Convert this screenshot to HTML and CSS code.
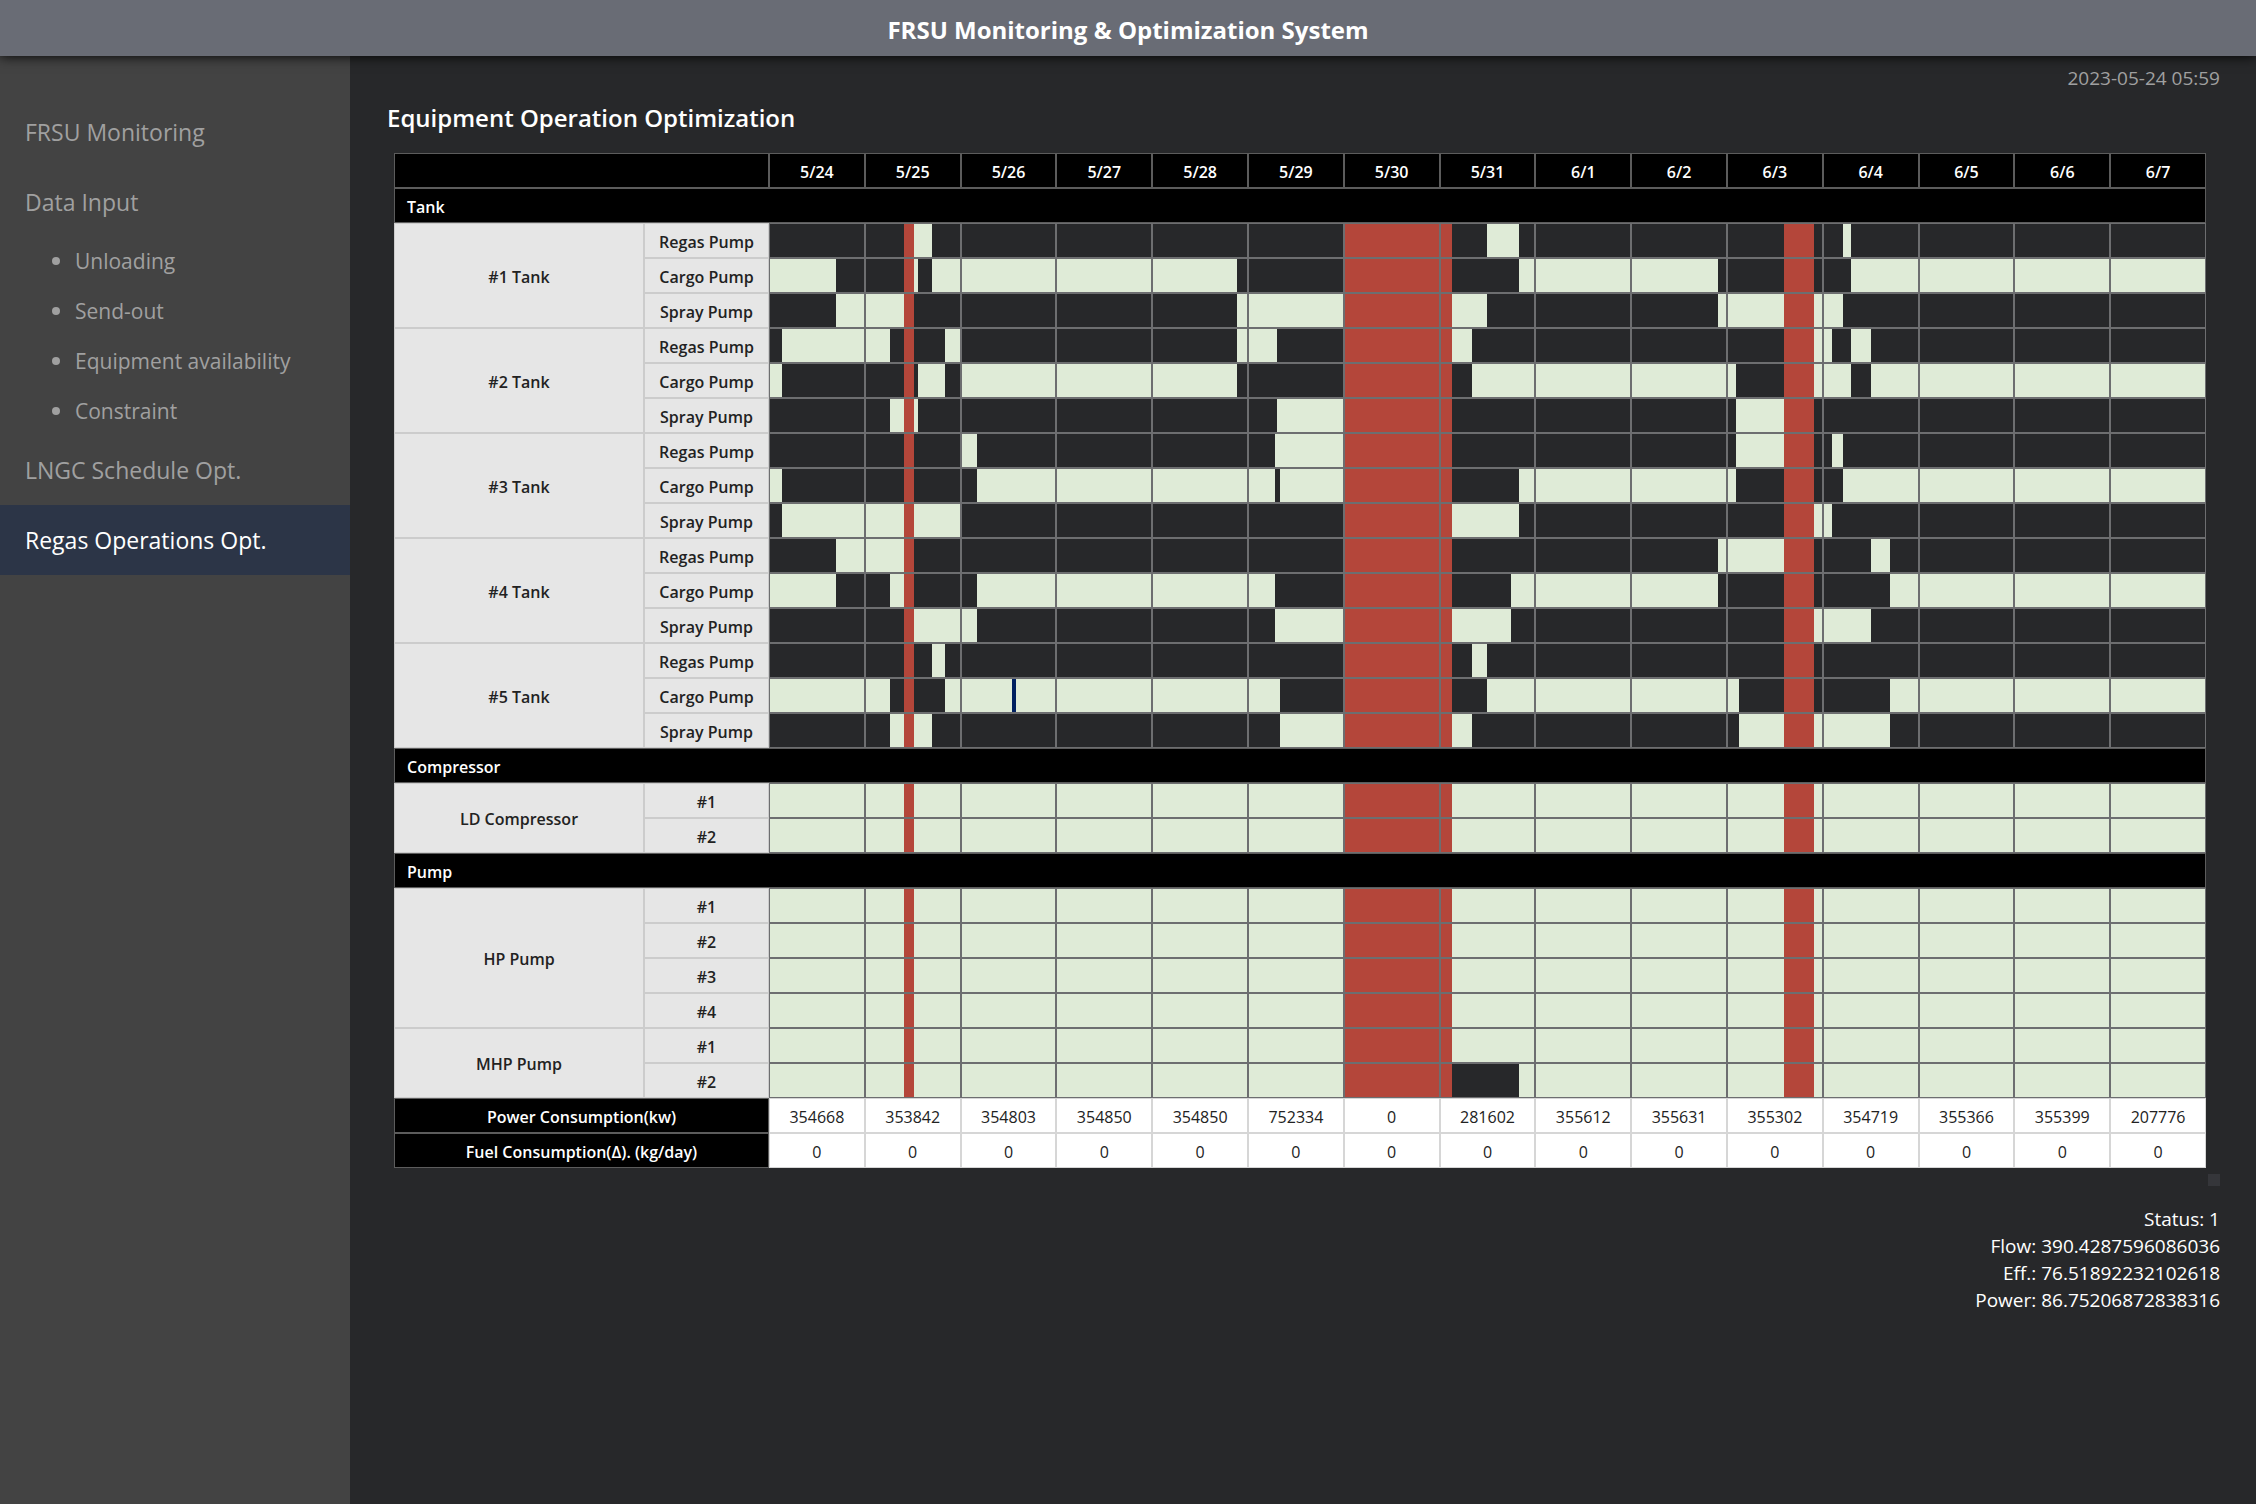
FILE: index.html
```html
<!DOCTYPE html>
<html lang="en">
<head>
<meta charset="utf-8">
<title>FRSU Monitoring &amp; Optimization System</title>
<link rel="stylesheet" href="styles.css">
</head>
<body>
<header class="topbar">FRSU Monitoring &amp; Optimization System</header>
<div class="layout">
  <nav class="sidebar">
    <a class="nav-link" href="#monitoring">FRSU Monitoring</a>
    <a class="nav-link" href="#input">Data Input</a>
    <ul class="subnav">
      <li><a href="#unloading">Unloading</a></li>
      <li><a href="#send-out">Send-out</a></li>
      <li><a href="#availability">Equipment availability</a></li>
      <li><a href="#constraint">Constraint</a></li>
    </ul>
    <a class="nav-link" href="#lngc">LNGC Schedule Opt.</a>
    <a class="nav-link active" href="#regas" aria-current="page">Regas Operations Opt.</a>
  </nav>
  <main class="content">
    <time class="clock" datetime="2023-05-24T05:59">2023-05-24 05:59</time>
    <h1 class="title">Equipment Operation Optimization</h1>
    <div class="schedule-wrap">
      <table class="schedule">
        <colgroup><col class="col-group"><col class="col-unit"><col span="15"></colgroup>
        <thead>
          <tr class="days"><th colspan="2"></th><th>5/24</th><th>5/25</th><th>5/26</th><th>5/27</th><th>5/28</th><th>5/29</th><th>5/30</th><th>5/31</th><th>6/1</th><th>6/2</th><th>6/3</th><th>6/4</th><th>6/5</th><th>6/6</th><th>6/7</th></tr>
        </thead>
        <tbody>
          <tr class="section"><th colspan="17">Tank</th></tr>
          <tr data-on="36.3-40.9 179.9-188.1 268.9-271"><th rowspan="3">#1 Tank</th><th>Regas Pump</th></tr>
          <tr data-on="0-17 36.3-37.4 40.9-117.4 188.1-238 271-360"><th>Cargo Pump</th></tr>
          <tr data-on="17-33.8 117.4-144 170.9-179.9 238-268.9"><th>Spray Pump</th></tr>
          <tr data-on="3-30.2 44.3-48 117.4-127.2 170.9-176 262-266.1 271-276.1"><th rowspan="3">#2 Tank</th><th>Regas Pump</th></tr>
          <tr data-on="0-3 37.4-44.3 48-117.4 176-242 262-271 276.1-360"><th>Cargo Pump</th></tr>
          <tr data-on="30.2-33.8 36.3-37.4 127.2-144 242-254.3"><th>Spray Pump</th></tr>
          <tr data-on="48-51.9 126.7-144 242-254.3 266.1-268.9"><th rowspan="3">#3 Tank</th><th>Regas Pump</th></tr>
          <tr data-on="0-3 51.9-126.7 127.9-144 188.1-242 268.9-360"><th>Cargo Pump</th></tr>
          <tr data-on="3-48 170.9-188.1 262-266.1"><th>Spray Pump</th></tr>
          <tr data-on="17-33.8 238-254.3 276.1-280.9"><th rowspan="3">#4 Tank</th><th>Regas Pump</th></tr>
          <tr data-on="0-17 30.2-33.8 51.9-126.7 186-238 280.9-360"><th>Cargo Pump</th></tr>
          <tr data-on="36.3-51.9 126.7-144 170.9-186 262-276.1"><th>Spray Pump</th></tr>
          <tr data-on="40.9-44.3 176-179.9"><th rowspan="3">#5 Tank</th><th>Regas Pump</th></tr>
          <tr data-on="0-30.2 44.3-127.9 179.9-242.8 280.9-360" data-mark="60.9-61.9"><th>Cargo Pump</th></tr>
          <tr data-on="30.2-40.9 127.9-144 170.9-176 242.8-280.9"><th>Spray Pump</th></tr>
        </tbody>
        <tbody>
          <tr class="section"><th colspan="17">Compressor</th></tr>
          <tr data-on="0-360"><th rowspan="2">LD Compressor</th><th>#1</th></tr>
          <tr data-on="0-360"><th>#2</th></tr>
        </tbody>
        <tbody>
          <tr class="section"><th colspan="17">Pump</th></tr>
          <tr data-on="0-360"><th rowspan="4">HP Pump</th><th>#1</th></tr>
          <tr data-on="0-360"><th>#2</th></tr>
          <tr data-on="0-360"><th>#3</th></tr>
          <tr data-on="0-360"><th>#4</th></tr>
          <tr data-on="0-360"><th rowspan="2">MHP Pump</th><th>#1</th></tr>
          <tr data-on="0-170.9 188.1-360"><th>#2</th></tr>
        </tbody>
        <tfoot>
          <tr><th colspan="2">Power Consumption(kw)</th><td>354668</td><td>353842</td><td>354803</td><td>354850</td><td>354850</td><td>752334</td><td>0</td><td>281602</td><td>355612</td><td>355631</td><td>355302</td><td>354719</td><td>355366</td><td>355399</td><td>207776</td></tr>
          <tr><th colspan="2">Fuel Consumption(Δ). (kg/day)</th><td>0</td><td>0</td><td>0</td><td>0</td><td>0</td><td>0</td><td>0</td><td>0</td><td>0</td><td>0</td><td>0</td><td>0</td><td>0</td><td>0</td><td>0</td></tr>
        </tfoot>
      </table>
      <div class="scroll-corner"></div>
    </div>
    <div class="status">
      <div>Status: 1</div>
      <div>Flow: 390.4287596086036</div>
      <div>Eff.: 76.51892232102618</div>
      <div>Power: 86.75206872838316</div>
    </div>
  </main>
</div>
<script src="schedule.js"></script>
</body>
</html>
```

FILE: styles.css
```css
* { box-sizing: border-box; }

body {
  margin: 0;
  min-height: 100vh;
  display: flex;
  flex-direction: column;
  background: #27282a;
  color: #fff;
  font-family: "Open Sans", "Noto Sans", sans-serif;
  font-size: 19px;
}

a { color: inherit; text-decoration: none; }

.topbar {
  position: relative;
  z-index: 1;
  height: 56px;
  padding-top: 4px;
  background: #696c75;
  box-shadow: 0 0 12px #000;
  font-size: 24px;
  font-weight: 700;
  line-height: 52px;
  text-align: center;
}

.layout { flex: 1; display: flex; }

.sidebar {
  flex: 0 0 350px;
  padding-top: 41px;
  background: #434343;
  color: #a0a0a0;
}

.nav-link {
  display: block;
  padding: 0 25px;
  font-size: 23px;
  line-height: 70px;
}
.nav-link.active { background: #2c3547; color: #fff; }

.subnav {
  margin: -1px 0;
  padding: 0 0 0 52px;
  list-style: none;
  font-size: 21px;
  line-height: 50px;
}
.subnav li { display: flex; align-items: center; gap: 15px; }
.subnav li::before {
  content: "";
  width: 8px;
  height: 8px;
  border-radius: 50%;
  background: currentColor;
}

.content { flex: 1; min-width: 0; padding: 8px 36px 0 37px; }

.clock {
  display: block;
  color: #a0a0a0;
  line-height: 28px;
  text-align: right;
}

.title {
  margin: 8px 0 18px;
  font-size: 24px;
  font-weight: 650;
  line-height: 35px;
}

.schedule-wrap { padding-left: 7px; }

.schedule {
  width: calc(100% - 14px);
  table-layout: fixed;
  border-collapse: separate;
  border-spacing: 0;
  color: #222;
  font-size: 16px;
  line-height: 20px;
  text-align: center;
}
.col-group { width: 250px; }
.col-unit { width: 125px; }

.schedule th,
.schedule td {
  height: 35px;
  padding: 2px 0 0;
  border: 1px solid #ccc;
  background: #e6e6e6;
  font-weight: 650;
}
.schedule td { background: #fff; border-color: #d6d6d6; font-weight: 500; }
.schedule .days th,
.schedule .section th,
.schedule tfoot th {
  border-color: #5c5c5c;
  background: #000;
  color: #fff;
}
.schedule .section th { padding-left: 12px; text-align: left; }

.schedule .slot {
  padding: 0;
  border-color: #6d6e70;
  background: #27282a;
}
.bars { display: flex; height: 33px; }
.on { background: #dfebd7; }
.down { background: #b4463a; }
.mark { background: #002060; }

.scroll-corner {
  width: 12px;
  height: 12px;
  margin: 6px 0 0 auto;
  background: #35363a;
}

.status {
  margin-top: 20px;
  line-height: 27px;
  text-align: right;
}
```

FILE: schedule.js
```js
// Hours are counted from 5/24 00:00; each table column is one day.
const DAYS = 15;
const DOWNTIME = "33.8-36.3 144-170.9 254.3-262";

const parse = (text, kind) =>
  (text || "").split(" ").filter(Boolean).map((range) => {
    const [start, end] = range.split("-").map(Number);
    return { start, end, kind };
  });

document.querySelectorAll("tr[data-on]").forEach((row) => {
  // Later ranges win over earlier ones.
  const ranges = [
    ...parse(row.dataset.on, "on"),
    ...parse(row.dataset.mark, "mark"),
    ...parse(DOWNTIME, "down"),
  ];
  const kindAt = (hour) =>
    ranges.reduce((kind, r) => (hour >= r.start && hour < r.end ? r.kind : kind), "off");

  for (let day = 0; day < DAYS; day++) {
    const from = day * 24;
    const to = from + 24;
    const edges = ranges.flatMap((r) => [r.start, r.end]).filter((h) => h > from && h < to);
    const stops = [...new Set([from, ...edges, to])].sort((a, b) => a - b);

    const cell = row.insertCell();
    cell.className = "slot";
    const bars = document.createElement("div");
    bars.className = "bars";
    for (let i = 0; i < stops.length - 1; i++) {
      const bar = document.createElement("span");
      bar.className = kindAt(stops[i]);
      bar.style.width = ((stops[i + 1] - stops[i]) / 24) * 100 + "%";
      bars.append(bar);
    }
    cell.append(bars);
  }
});
```
